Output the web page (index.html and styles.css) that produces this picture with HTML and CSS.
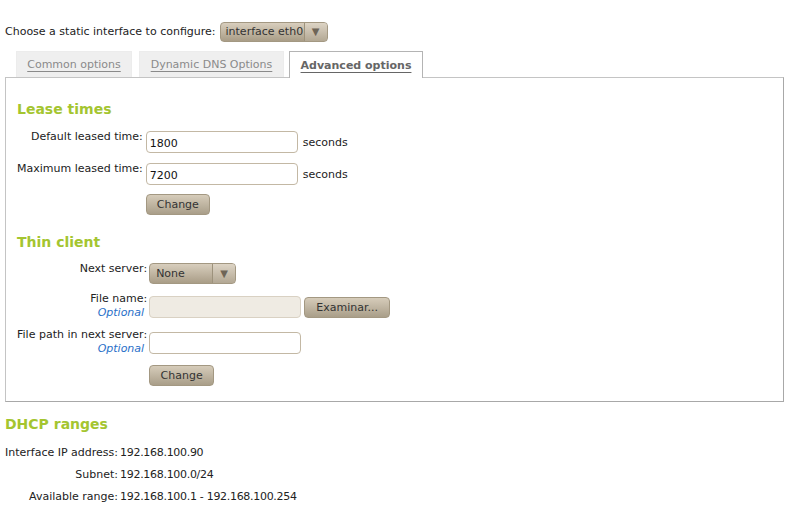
FILE: index.html
```html
<!DOCTYPE html>
<html>
<head>
<meta charset="utf-8">
<link rel="stylesheet" href="styles.css">
</head>
<body>
<div class="topbar">
  <span>Choose a static interface to configure:</span>
  <div class="select select-iface"><span class="sel-text">interface eth0</span><span class="sel-arrow">▼</span></div>
</div>
<div class="tabs">
  <a class="tab tab-common">Common options</a>
  <a class="tab tab-ddns">Dynamic DNS Options</a>
  <a class="tab tab-active">Advanced options</a>
</div>
<div class="panel">
  <h3 class="heading">Lease times</h3>
  <div class="form form-lease">
    <label class="lbl">Default leased time:</label>
    <div class="field"><input class="text" type="text" value="1800"><span class="unit">seconds</span></div>
    <label class="lbl">Maximum leased time:</label>
    <div class="field"><input class="text" type="text" value="7200"><span class="unit">seconds</span></div>
    <span></span>
    <div class="field"><button class="btn btn-change">Change</button></div>
  </div>
  <h3 class="heading heading-thin">Thin client</h3>
  <div class="form form-thin">
    <label class="lbl">Next server:</label>
    <div class="field"><div class="select select-none"><span class="sel-text">None</span><span class="sel-arrow">▼</span></div></div>
    <label class="lbl">File name:<span class="opt">Optional</span></label>
    <div class="field field-tall"><input class="text text-disabled" type="text" disabled><button class="btn btn-browse">Examinar...</button></div>
    <label class="lbl">File path in next server:<span class="opt">Optional</span></label>
    <div class="field field-tall"><input class="text" type="text"></div>
    <span></span>
    <div class="field"><button class="btn btn-change2">Change</button></div>
  </div>
</div>
<h3 class="heading heading-dhcp">DHCP ranges</h3>
<div class="info">
  <span class="ilbl">Interface IP address:</span><span class="ival">192.168.100.90</span>
  <span class="ilbl">Subnet:</span><span class="ival">192.168.100.0/24</span>
  <span class="ilbl">Available range:</span><span class="ival">192.168.100.1 - 192.168.100.254</span>
</div>
</body>
</html>
```
FILE: styles.css
```css
html, body {
  margin: 0;
  background: #fff;
}
body {
  padding: 21px 12px 0 5px;
  font-family: "DejaVu Sans", sans-serif;
  font-size: 11px;
  color: #222;
}
.topbar {
  display: flex;
  align-items: center;
  gap: 4px;
  height: 21px;
}
.select {
  display: flex;
  align-items: stretch;
  height: 20px;
  box-sizing: border-box;
  border: 1px solid #a39882;
  border-radius: 4px;
  background: linear-gradient(#d8cebd, #a99d87);
  color: #333;
  overflow: hidden;
}
.sel-text {
  display: flex;
  align-items: center;
  padding: 0 0 0 6px;
  flex: 1;
  white-space: nowrap;
}
.sel-arrow {
  display: flex;
  align-items: center;
  justify-content: center;
  width: 22px;
  border-left: 1px solid #9d927c;
  font-size: 10px;
  color: #6e6557;
  background: linear-gradient(#ddd4c5, #b3a894);
}
.select-iface { width: 108px; }
.select-iface .sel-text { padding-left: 5px; }
.select-none { width: 87px; height: 21px; }

.tabs {
  display: flex;
  margin: 9px 0 0 11px;
  height: 27px;
  position: relative;
  z-index: 1;
}
.tab {
  display: flex;
  align-items: center;
  justify-content: center;
  box-sizing: border-box;
  height: 26px;
  background: #efefef;
  color: #8a8a8a;
  text-decoration: underline;
  text-underline-offset: 3px;
  border: 1px solid #ececec;
  border-bottom: none;
}
.tab-common { width: 116px; margin-right: 7px; }
.tab-ddns { width: 145px; margin-right: 5px; }
.tab-active {
  width: 134px;
  height: 27px;
  background: #fff;
  border: 1px solid #b4b4b4;
  border-bottom: none;
  color: #666;
  font-weight: bold;
}
.panel {
  margin-top: -1px;
  border: 1px solid #c4c4c4;
  border-right-color: #a8a8a8;
  border-bottom-color: #a8a8a8;
  padding: 22px 10px 15px 11px;
}
.heading {
  margin: 0;
  font-size: 14px;
  font-weight: bold;
  color: #a4c530;
  line-height: 18px;
}
.form {
  display: grid;
  grid-template-columns: auto 1fr;
  column-gap: 3px;
  align-items: start;
}
.form-lease {
  margin-top: 12px;
  row-gap: 9px;
}
.lbl {
  display: flex;
  flex-direction: column;
  align-items: flex-end;
  text-align: right;
  line-height: 14px;
  white-space: nowrap;
}
.opt {
  color: #2a70c8;
  font-style: italic;
  padding-right: 3px;
}
.field {
  display: flex;
  align-items: center;
  gap: 5px;
  padding-top: 1px;
}
.field-tall { padding-top: 4px; }
.text {
  box-sizing: border-box;
  width: 152px;
  height: 22px;
  margin: 0;
  border: 1px solid #c3b8a4;
  border-radius: 4px;
  padding: 2px 3px 0;
  font-family: "DejaVu Sans", sans-serif;
  font-size: 11px;
  color: #111;
  background: #fff;
}
.text-disabled {
  background: #efebe3;
  border-color: #d9d1c3;
}
.btn {
  box-sizing: border-box;
  height: 21px;
  margin: 0;
  padding: 0 8px;
  border: 1px solid #a39882;
  border-radius: 4px;
  background: linear-gradient(#d6ccba, #a99e89);
  color: #333;
  font-family: "DejaVu Sans", sans-serif;
  font-size: 11px;
}
.btn-change { width: 64px; margin-top: -1px; }
.heading-thin { margin-top: 18px; }
.form-thin {
  margin-top: 11px;
  row-gap: 8px;
  column-gap: 2px;
}
.btn-browse { width: 86px; margin-left: -2px; }
.btn-change2 { width: 65px; height: 21px; }
.heading-dhcp {
  margin-top: 13px;
}
.info {
  display: grid;
  grid-template-columns: auto 1fr;
  column-gap: 2px;
  margin-top: 12px;
  row-gap: 7px;
  line-height: 15px;
}
.ilbl { text-align: right; white-space: nowrap; }
.ival { white-space: nowrap; letter-spacing: -0.3px; }
```
